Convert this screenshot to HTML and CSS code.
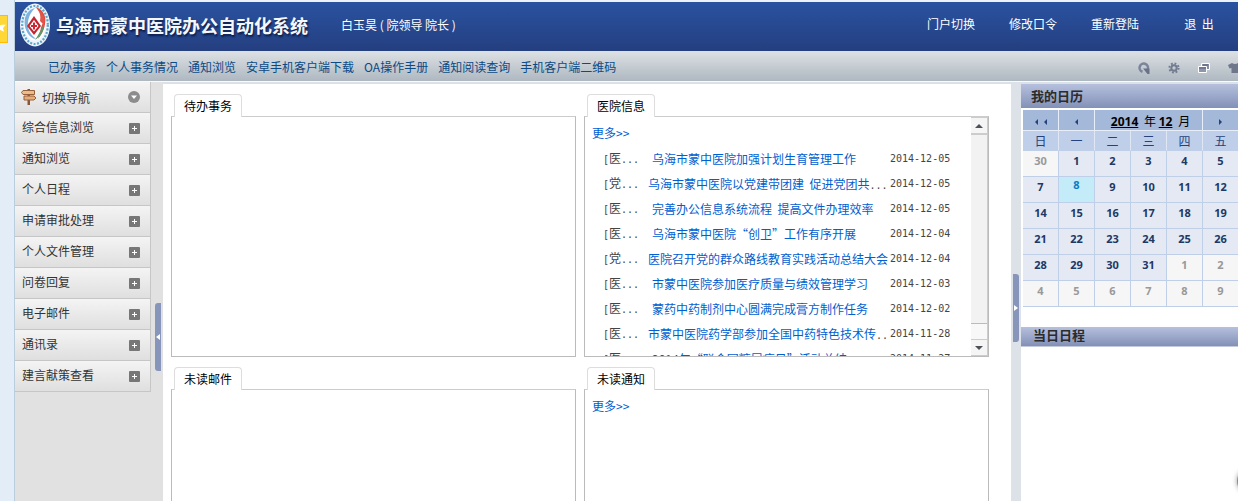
FILE: index.html
```html
<!DOCTYPE html>
<html lang="zh-CN">
<head>
<meta charset="utf-8">
<title>乌海市蒙中医院办公自动化系统</title>
<link rel="stylesheet" href="styles.css">
</head>
<body>
<div class="page">
  <aside class="edge">
    <button class="fav" aria-label="收藏"><svg width="7" height="28" viewBox="0 0 7 28"><path d="M-5 10H-2L0 10L2 9.500H6L3 13L4 17L0 15Z" fill="#fff"/></svg></button>
  </aside>
  <div class="app">
    <header class="banner">
      <svg class="logo" width="32" height="44" viewBox="0 0 32 44">
        <ellipse cx="16" cy="22" rx="15" ry="21.500" fill="#eef4fa"/>
        <ellipse cx="16" cy="22" rx="12.800" ry="19" fill="none" stroke="#5aa6cc" stroke-width="2.200" stroke-dasharray="2 1.500"/>
        <ellipse cx="16" cy="21" rx="11" ry="16.500" fill="#fff"/>
        <path d="M16 5C6 7 3 19 8 29C10 33 14 36 17 36C11 31 8 26 9 19C10 12 13 8 16 5Z" fill="#7fb2de"/>
        <path d="M16 4C23 5 28 13 26 21C25 28 22 32 19 36C22 28 21 25 24 20C25 13 21 8 16 4Z" fill="#e0493d"/>
        <path d="M18 6C24 9 27 15 25 22L21 18C22 13 21 9 18 6Z" fill="#e0564a"/>
        <path d="M25 21C25 29 21 34 16 37C20 31 22 26 25 21Z" fill="#5c9a68"/>
        <path d="M15 13L22 23L15 32L8 23Z" fill="#c2232f"/>
        <path d="M15 17L19.500 23L15 28.500L10.500 23Z" fill="#fff"/>
        <path d="M14 19.500H16V22H18V24H16V26.500H14V24H12V22H14Z" fill="#cf2733"/>
      </svg>
      <h1 class="brand">乌海市蒙中医院办公自动化系统</h1>
      <span class="user">白玉昊 ( 院领导 院长 )</span>
      <nav class="account">
        <a href="#">门户切换</a><a href="#">修改口令</a><a href="#">重新登陆</a><a href="#">退&nbsp; 出</a>
      </nav>
    </header>
    <div class="toolbar">
      <nav class="quick">
        <a href="#">已办事务</a><a href="#">个人事务情况</a><a href="#">通知浏览</a><a href="#">安卓手机客户端下载</a><a href="#">OA操作手册</a><a href="#">通知阅读查询</a><a href="#">手机客户端二维码</a>
      </nav>
      <div class="tools">
        <button aria-label="刷新"><svg width="12" height="12" viewBox="0 0 12 12"><path d="M4.500 9.800A4.200 4.200 0 1 1 9.800 7" fill="none" stroke="#7c8499" stroke-width="2.500"/><path d="M5 6.500H11.500V12H9.500Z" fill="#6a7186"/></svg></button>
        <button aria-label="设置"><svg width="12" height="12" viewBox="0 0 12 12"><circle cx="6" cy="6" r="2.700" fill="none" stroke="#737b90" stroke-width="2"/><circle cx="6" cy="6" r="4.600" fill="none" stroke="#737b90" stroke-width="2" stroke-dasharray="1.800 1.810"/></svg></button>
        <button aria-label="窗口"><svg width="12" height="12" viewBox="0 0 12 12"><path d="M3.500 1.500H11.500V7.500H3.500Z" fill="#8890a5" stroke="#fff"/><path d="M5 3H10" stroke="#555d78"/><path d="M.5 4.500H8.500V10.500H.5Z" fill="#8e96ab" stroke="#fff"/><path d="M1 6H8" stroke="#555d78"/></svg></button>
        <button class="skin" aria-label="皮肤"><svg width="14" height="12" viewBox="0 0 14 12"><path d="M4 1Q7 3 10 1L14 3L12.500 6.500L10.500 6V11H3.500V6L1.500 6.500L0 3Z" fill="#6f778c"/></svg></button>
      </div>
    </div>
    <div class="body">
      <nav class="side">
        <button class="item head"><svg width="16" height="18" viewBox="0 0 16 18"><path d="M6.500 1H9V17H6.500Z" fill="#8b5637"/><path d="M2 2.500H13.500V6.500H2L.5 4.500Z" fill="#edbb8b" stroke="#97603d"/><path d="M3 8H13L15 10L13 12H3Z" fill="#e6ad7c" stroke="#97603d"/></svg><span>切换导航</span><svg class="mark" width="12" height="12" viewBox="0 0 12 12"><circle cx="6" cy="6" r="6" fill="#8c8c8c"/><path d="M3 4.500H9L6 8Z" fill="#fff"/></svg></button>
        <button class="item"><span>综合信息浏览</span><i class="plus"></i></button>
        <button class="item"><span>通知浏览</span><i class="plus"></i></button>
        <button class="item"><span>个人日程</span><i class="plus"></i></button>
        <button class="item"><span>申请审批处理</span><i class="plus"></i></button>
        <button class="item"><span>个人文件管理</span><i class="plus"></i></button>
        <button class="item"><span>问卷回复</span><i class="plus"></i></button>
        <button class="item"><span>电子邮件</span><i class="plus"></i></button>
        <button class="item"><span>通讯录</span><i class="plus"></i></button>
        <button class="item"><span>建言献策查看</span><i class="plus"></i></button>
      </nav>
      <div class="split left"><button class="grip" aria-label="收起导航"><svg width="4" height="8" viewBox="0 0 4 8"><path d="M4 1V7L0 4Z" fill="#fff"/></svg></button></div>
      <main class="desk">
        <section class="panel">
          <h2 class="tab">待办事务</h2>
          <div class="box"></div>
        </section>
        <section class="panel">
          <h2 class="tab">医院信息</h2>
          <div class="box news">
            <div class="feed">
              <a class="more" href="#">更多&gt;&gt;</a>
              <ul class="list">
                <li><span class="tag">[<b>医</b>...</span><a class="short" href="#">乌海市蒙中医院加强计划生育管理工作</a><time>2014-12-05</time></li>
                <li><span class="tag">[<b>党</b>...</span><a href="#">乌海市蒙中医院以党建带团建&nbsp; 促进党团共<span class="dots">...</span></a><time>2014-12-05</time></li>
                <li><span class="tag">[<b>医</b>...</span><a class="short" href="#">完善办公信息系统流程&nbsp; 提高文件办理效率</a><time>2014-12-05</time></li>
                <li><span class="tag">[<b>医</b>...</span><a class="short" href="#">乌海市蒙中医院“创卫”工作有序开展</a><time>2014-12-04</time></li>
                <li><span class="tag">[<b>党</b>...</span><a href="#">医院召开党的群众路线教育实践活动总结大会</a><time>2014-12-04</time></li>
                <li><span class="tag">[<b>医</b>...</span><a class="short" href="#">市蒙中医院参加医疗质量与绩效管理学习</a><time>2014-12-03</time></li>
                <li><span class="tag">[<b>医</b>...</span><a class="short" href="#">蒙药中药制剂中心圆满完成膏方制作任务</a><time>2014-12-02</time></li>
                <li><span class="tag">[<b>医</b>...</span><a href="#">市蒙中医院药学部参加全国中药特色技术传<span class="dots">..</span></a><time>2014-11-28</time></li>
                <li><span class="tag">[<b>医</b>...</span><a class="short" href="#">2014年“联合国糖尿病日”活动总结</a><time>2014-11-27</time></li>
              </ul>
            </div>
            <div class="bar">
              <button aria-label="向上滚动"><svg width="8" height="4" viewBox="0 0 8 4"><path d="M0 4L4 0L8 4Z" fill="#4d5157"/></svg></button>
              <div class="thumb"></div>
              <button aria-label="向下滚动"><svg width="8" height="4" viewBox="0 0 8 4"><path d="M0 0L4 4L8 0Z" fill="#4d5157"/></svg></button>
            </div>
          </div>
        </section>
        <section class="panel open">
          <h2 class="tab">未读邮件</h2>
          <div class="box"></div>
        </section>
        <section class="panel open">
          <h2 class="tab">未读通知</h2>
          <div class="box"><div class="feed"><a class="more" href="#">更多&gt;&gt;</a></div></div>
        </section>
      </main>
      <div class="split right"><button class="grip" aria-label="收起日历"><svg width="4" height="8" viewBox="0 0 4 8"><path d="M0 1V7L4 4Z" fill="#fff"/></svg></button></div>
      <aside class="agenda">
        <h2 class="bar-title">我的日历</h2>
        <table class="cal">
          <thead>
            <tr class="nav">
              <td><button aria-label="上一年"><svg width="12" height="6" viewBox="0 0 12 6"><path d="M3 0V6L0 3ZM12 0V6L9 3Z" fill="#24437c"/></svg></button></td>
              <td><button aria-label="上一月"><svg width="3" height="6" viewBox="0 0 3 6"><path d="M3 0V6L0 3Z" fill="#24437c"/></svg></button></td>
              <td class="when" colspan="3"><button>2014</button> 年 <button>12</button> 月</td>
              <td><button aria-label="下一月"><svg width="3" height="6" viewBox="0 0 3 6"><path d="M0 0V6L3 3Z" fill="#24437c"/></svg></button></td>
            </tr>
            <tr><th>日</th><th>一</th><th>二</th><th>三</th><th>四</th><th>五</th></tr>
          </thead>
          <tbody>
            <tr><td class="off">30</td><td>1</td><td>2</td><td>3</td><td>4</td><td>5</td></tr>
            <tr><td>7</td><td class="today">8</td><td>9</td><td>10</td><td>11</td><td>12</td></tr>
            <tr><td>14</td><td>15</td><td>16</td><td>17</td><td>18</td><td>19</td></tr>
            <tr><td>21</td><td>22</td><td>23</td><td>24</td><td>25</td><td>26</td></tr>
            <tr><td>28</td><td>29</td><td>30</td><td>31</td><td class="off">1</td><td class="off">2</td></tr>
            <tr><td class="off">4</td><td class="off">5</td><td class="off">6</td><td class="off">7</td><td class="off">8</td><td class="off">9</td></tr>
          </tbody>
        </table>
        <h2 class="bar-title small">当日日程</h2>
      </aside>
    </div>
  </div>
  <div class="float"></div>
</div>
</body>
</html>
```
FILE: styles.css
```css
* { box-sizing: border-box; }
body {
  margin: 0;
  font: 12px/16px "Noto Sans CJK SC", sans-serif;
  color: #333;
  background: #fff;
}
button {
  margin: 0;
  padding: 0;
  border: 0;
  background: none;
  font: inherit;
  color: inherit;
}
a { text-decoration: none; color: #0060d0; }
h1, h2, ul { margin: 0; padding: 0; }
svg { display: block; }

.page {
  position: relative;
  display: flex;
  height: 100vh;
  overflow: hidden;
}
.edge {
  flex: 0 0 15px;
  padding-top: 15px;
  background: #e3edf7;
  border-right: 1px solid #b9cedd;
}
.fav {
  display: block;
  background: #ffd736;
  border: solid #fb0;
  border-width: 1px 1px 1px 0;
}
.fav svg { height: 26px; }
.app {
  flex: 1;
  min-width: 0;
  display: flex;
  flex-direction: column;
  border-top: 2px solid #eef3fa;
}

/* Banner */
.banner {
  display: flex;
  align-items: center;
  height: 49px;
  padding: 0 0 4px 4px;
  background: linear-gradient(#2a52a0, #243f80);
  color: #fff;
}
.brand {
  margin-left: 5px;
  font-size: 18px;
  line-height: 24px;
  font-weight: 700;
  color: #f4f7fb;
  text-shadow: 1px 2px 2px #0b1c48;
}
.user { margin-left: 33px; }
.account {
  display: grid;
  grid-template-columns: repeat(4, 82px);
  margin-left: auto;
  padding-bottom: 2px;
  text-align: center;
}
.account a { color: #fff; }
.account a:last-child { padding-left: 4px; }

/* Toolbar */
.toolbar {
  display: flex;
  align-items: center;
  justify-content: space-between;
  height: 30px;
  padding: 2px 0 0 33px;
  background: linear-gradient(#dde1e4, #aeb8c1);
}
.quick { display: flex; gap: 10px; }
.quick a { color: #0a4a86; }
.tools {
  display: flex;
  gap: 18px;
  padding-top: 2px;
}
.tools .skin { width: 10px; overflow: hidden; }

.body {
  flex: 1;
  min-height: 0;
  display: flex;
  border-top: 1px solid #f8fafc;
  background: #dce1e8;
}

/* Navigation */
.side {
  flex: 0 0 136px;
  background: #e1e1e1;
}
.item {
  display: flex;
  align-items: center;
  justify-content: space-between;
  width: 100%;
  height: 31px;
  padding: 0 10px 0 7px;
  border-right: 1px solid #c6c6c6;
  border-bottom: 1px solid #c6c6c6;
  background: linear-gradient(#f4f4f4, #dfdfdf);
}
.item span { padding-bottom: 2px; }
.head {
  gap: 5px;
  padding: 2px 10px 0 6px;
}
.head svg { margin-bottom: 2px; }
.head span { padding-bottom: 0; }
.head .mark { margin-left: auto; }
.plus {
  width: 11px;
  height: 11px;
  border-radius: 1px;
  background:
    linear-gradient(#fff, #fff) center / 5px 1px no-repeat,
    linear-gradient(#fff, #fff) center / 1px 5px no-repeat,
    #777;
}

.split.left {
  flex: 0 0 12px;
  padding: 221px 2px 0 4px;
  background: #e1e1e1;
}
.split.right {
  flex: 0 0 10px;
  padding: 192px 2px 0;
  background: #dce2e8;
}
.grip {
  display: flex;
  align-items: center;
  justify-content: center;
  width: 6px;
  height: 68px;
  background: #8795bb;
}
.left .grip { border-radius: 3px 0 0 3px; }
.right .grip { border-radius: 0 3px 3px 0; }

/* Desktop panels */
.desk {
  flex: 1;
  min-width: 0;
  display: grid;
  grid-template-columns: 1fr 1fr;
  grid-template-rows: 263px 1fr;
  gap: 10px 8px;
  margin-top: 2px;
  padding: 10px 22px 0 8px;
  background: #fff;
}
.panel {
  display: flex;
  flex-direction: column;
  min-width: 0;
  min-height: 0;
}
.tab {
  z-index: 1;
  align-self: flex-start;
  height: 23px;
  margin: 0 0 -1px 3px;
  padding: 3px 9px 0;
  border: 1px solid #ddd;
  border-bottom: 0;
  border-radius: 4px 4px 0 0;
  background: #fff;
  font-size: 12px;
  line-height: 16px;
  font-weight: 400;
  color: #000;
}
.box {
  flex: 1;
  min-height: 0;
  border: 1px solid #bbb;
  border-top-color: #ccc;
}
.open .box { border-bottom: 0; }
.news {
  display: flex;
  overflow: hidden;
}
.feed {
  flex: 1;
  min-width: 0;
  padding: 8px 0 0 7px;
}
.more { display: block; }
.list {
  list-style: none;
  padding: 5px 0 0 11px;
}
.list li {
  display: grid;
  grid-template-columns: 45px 242px 1fr;
  align-items: center;
  height: 25px;
  line-height: 16px;
  white-space: nowrap;
}
.list time, .tag, .dots {
  font-family: "DejaVu Sans Mono", monospace;
  font-size: 10px;
  color: #444;
}
.dots { line-height: 10px; }
.tag b {
  font: 12px/16px "Noto Sans CJK SC", sans-serif;
}
.list .short { padding-left: 4px; }

.bar {
  flex: 0 0 17px;
  display: flex;
  flex-direction: column;
  border-right: 1px solid #ccc;
  background: #f8f8f8;
}
.bar button {
  display: flex;
  align-items: center;
  justify-content: center;
  height: 17px;
  background: #f5f5f5;
  border-top: 1px solid #ccc;
  border-bottom: 1px solid #ccc;
}
.thumb {
  flex: 1;
  margin-bottom: 15px;
  border-bottom: 1px solid #bbb;
  border-top: 1px solid #ccc;
  background: #f2f2f2;
}

/* Calendar */
.agenda {
  flex: 0 0 217px;
  margin-top: 2px;
  background: #fff;
}
.bar-title {
  height: 24px;
  padding-left: 10px;
  background: linear-gradient(#b6c0de, #8391b7);
  font-size: 13px;
  line-height: 23px;
  color: #2b2b2b;
}
.bar-title.small {
  height: 20px;
  margin-top: 20px;
  padding-left: 12px;
  line-height: 16px;
  border-bottom: 1px solid #c3cbdc;
}
.cal {
  width: calc(100% + 1px);
  padding: 2px 0 0 2px;
  border-spacing: 0;
  table-layout: fixed;
  text-align: center;
}
.cal td, .cal th {
  padding: 0;
  border-right: 1px solid #bfcfe8;
  border-bottom: 1px solid #bfcfe8;
}
.cal th {
  height: 20px;
  background: #bfcfea;
  border-right-color: #dfe7f4;
  font-weight: 400;
  color: #24437c;
}
.cal .nav td {
  height: 20px;
  background: #a4b8da;
  border-color: #e8eef7;
  color: #000;
}
.nav button {
  display: inline-block;
  vertical-align: middle;
}
.cal .nav .when { padding: 3px 0 0 4px; }
.nav .when button {
  margin-right: 3px;
  vertical-align: baseline;
  font: bold 12px/16px "Noto Sans", sans-serif;
  text-decoration: underline;
}
.cal tbody td {
  height: 26px;
  padding: 2px 0 8px;
  background: #e5e9f3;
  font: bold 11px/15px "Noto Sans", sans-serif;
  color: #203864;
}
.cal tbody .off { background: #f6f6f6; color: #999; }
.cal tbody .today {
  padding: 0 0 10px;
  background: #c3ebf8;
  color: #0b7cc4;
}

/* Floating launcher, mostly tucked beyond the window edge */
.float {
  position: absolute;
  right: -23px;
  bottom: 8px;
  width: 24px;
  height: 24px;
  border-radius: 50%;
  background: #888;
  box-shadow: 0 0 5px #999;
}
```
